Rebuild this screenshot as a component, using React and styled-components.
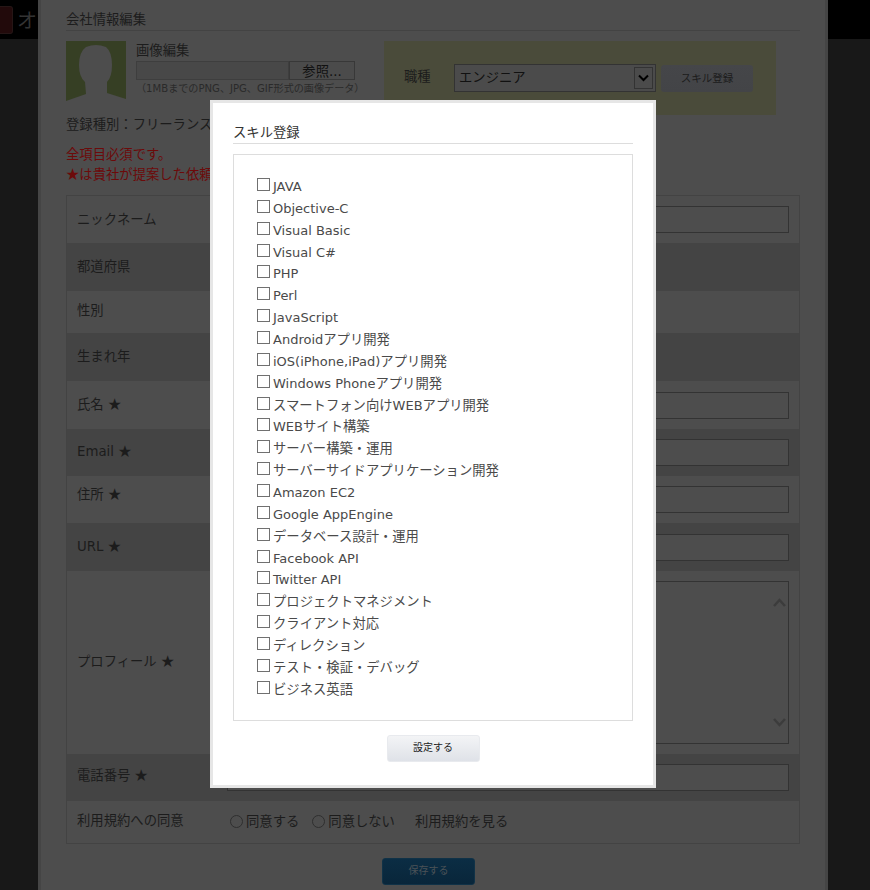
import React from "react";
import styled, { createGlobalStyle } from "styled-components";

const GlobalStyle = createGlobalStyle`
  html, body {
    margin: 0;
    height: 890px;
    overflow: hidden;
    background: #181818;
    font-family: "DejaVu Sans", "Noto Sans CJK JP", sans-serif;
    font-size: 13.33px;
    color: #1c1c1c;
  }
`;

const Page = styled.div`
  position: relative;
  width: 870px;
  height: 890px;
  overflow: hidden;
`;

const TopBar = styled.div`
  position: absolute;
  top: 0;
  left: 0;
  right: 0;
  height: 39px;
  background: #000;
  display: flex;
  align-items: center;
  gap: 4px;
`;

const Logo = styled.div`
  width: 12px;
  height: 26px;
  border-radius: 0 3px 3px 0;
  background: #220a0b;
  border: 1px solid #261616;
  border-left: 0;
`;

const TopTitle = styled.span`
  color: #333;
  font-size: 20px;
`;

const Sheet = styled.div`
  position: relative;
  width: 734px;
  height: 890px;
  margin-left: 38px;
  padding: 0 25px;
  background: #4d4d4d;
  border: solid #454545;
  border-width: 0 3px;
`;

const Heading = styled.h2`
  margin: 0;
  height: 31px;
  padding-top: 10px;
  box-sizing: border-box;
  font-size: 13.33px;
  font-weight: normal;
  line-height: 19px;
  border-bottom: 1px solid #434343;
`;

const TopRow = styled.div`
  display: flex;
  margin-top: 10px;
  height: 74px;
`;

const Avatar = styled.svg`
  width: 60px;
  height: 60px;
  flex: none;
  display: block;
`;

const UploadBlock = styled.div`
  width: 248px;
  margin-left: 10px;
`;

const UploadLabel = styled.div`
  line-height: 19px;
`;

const FileRow = styled.div`
  display: flex;
  height: 19px;
  margin-top: 1px;
`;

const FileField = styled.div`
  width: 153px;
  background: #484848;
  border: 1px solid #3e3e3e;
  box-sizing: border-box;
`;

const FileButton = styled.div`
  width: 66px;
  background: #4b4b4b;
  border: 1px solid #383838;
  box-sizing: border-box;
  text-align: center;
  line-height: 19px;
  color: #111;
`;

const Note = styled.div`
  font-size: 10.1px;
  line-height: 18px;
  white-space: nowrap;
  color: #2a2a2a;
`;

const JobPanel = styled.div`
  width: 392px;
  padding: 23px 0 0 20px;
  box-sizing: border-box;
  height: 74px;
  background: #4a4b3a;
  display: flex;
  align-items: flex-start;
`;

const JobLabel = styled.span`
  width: 50px;
  line-height: 25px;
`;

const SelectBox = styled.div`
  width: 202px;
  height: 28px;
  box-sizing: border-box;
  border: 1px solid #333;
  background: #4b4b4b;
  display: flex;
  align-items: center;
  justify-content: space-between;
  padding: 0 2px 0 4px;
  color: #111;
`;

const SelectValue = styled.span`
  margin-bottom: 3px;
`;

const SelectArrow = styled.div`
  width: 19px;
  height: 22px;
  box-sizing: border-box;
  border: 1px solid #333;
  display: flex;
  align-items: center;
  justify-content: center;
`;

const SmallButton = styled.div`
  width: 92px;
  height: 27px;
  margin: 1px 0 0 5px;
  border-radius: 3px;
  background: linear-gradient(#454649, #434447);
  font-size: 10.5px;
  line-height: 26px;
  text-align: center;
  color: #1c1c1c;
`;

const Info = styled.p`
  margin: 0;
  line-height: ${(p) => p.$line || 19}px;
  padding-top: ${(p) => p.$top || 0}px;
  color: ${(p) => p.$color || "#1c1c1c"};
  white-space: nowrap;
`;

const Star = styled.span`
  font-family: "Noto Sans CJK JP", sans-serif;
`;

const FormTable = styled.div`
  margin-top: 10px;
  width: 734px;
  box-sizing: border-box;
  border: 1px solid #434343;
`;

const Row = styled.div`
  display: flex;
  align-items: center;
  height: ${(p) => p.$h}px;
  background: ${(p) => (p.$alt ? "#444" : "#4d4d4d")};
  padding: 0 10px;
  box-sizing: border-box;
`;

const RowLabel = styled.div`
  width: 150px;
  flex: none;
  padding-bottom: ${(p) => p.$lift || 0}px;
`;

const Input = styled.div`
  flex: 1;
  height: 27px;
  box-sizing: border-box;
  border: 1px solid #333;
  background: #4d4d4d;
`;

const TextBox = styled.div`
  flex: 1;
  height: 163px;
  box-sizing: border-box;
  border: 1px solid #333;
  padding: 16px 2px 16px 0;
  display: flex;
  flex-direction: column;
  justify-content: space-between;
  align-items: flex-end;
`;

const ScrollArrow = styled.svg`
  width: 13px;
  height: 9px;
  display: block;
`;

const Agreement = styled.div`
  display: flex;
  align-items: center;
  gap: 3px;
  padding: 0 0 3px 3px;
`;

const Radio = styled.input`
  appearance: none;
  width: 13px;
  height: 13px;
  margin: 0;
  border: 1px solid #2f2f2f;
  border-radius: 50%;
  position: relative;
  top: 1px;
`;

const RadioText = styled.span`
  margin-right: ${(p) => p.$gap || 0}px;
`;

const SaveRow = styled.div`
  display: flex;
  justify-content: center;
  margin-top: 14px;
  padding-right: 9px;
`;

const SaveButton = styled.div`
  width: 93px;
  height: 27px;
  border-radius: 3px;
  background: linear-gradient(#0b2d44, #09263a);
  border: 1px solid #103247;
  box-sizing: border-box;
  color: #4a5257;
  font-size: 10px;
  line-height: 24px;
  text-align: center;
`;

const Modal = styled.div`
  position: absolute;
  left: 210px;
  top: 100px;
  width: 446px;
  height: 688px;
  box-sizing: border-box;
  background: #fff;
  border: 3px solid #e6e6e6;
  padding: 20px 20px 0;
  color: #4a4a4a;
`;

const ModalTitle = styled.h3`
  margin: 0;
  height: 20px;
  font-size: 13.33px;
  font-weight: normal;
  line-height: 19px;
  color: #333;
  border-bottom: 1px solid #ddd;
`;

const SkillBox = styled.div`
  margin-top: 10px;
  height: 567px;
  box-sizing: border-box;
  border: 1px solid #ddd;
  padding: 20px 23px;
`;

const SkillRow = styled.label`
  display: flex;
  align-items: flex-start;
  height: 21.87px;
  line-height: 23.87px;
  white-space: nowrap;
`;

const Check = styled.input`
  appearance: none;
  width: 13px;
  height: 13px;
  flex: none;
  margin: 3px 3px 0 0;
  box-sizing: border-box;
  border: 1px solid #707070;
  background: #fff;
`;

const Latin = styled.span`
  font-size: 13px;
`;

const ModalFooter = styled.div`
  display: flex;
  justify-content: center;
  margin-top: 14px;
`;

const SetButton = styled.div`
  width: 93px;
  height: 27px;
  box-sizing: border-box;
  border-radius: 3px;
  border: 1px solid #e8eaee;
  background: linear-gradient(#f3f4f6, #dfe2e8);
  font-size: 10px;
  line-height: 24px;
  text-align: center;
  color: #222;
`;

const skills = [
  "JAVA",
  "Objective-C",
  "Visual Basic",
  "Visual C#",
  "PHP",
  "Perl",
  "JavaScript",
  "Androidアプリ開発",
  "iOS(iPhone,iPad)アプリ開発",
  "Windows Phoneアプリ開発",
  "スマートフォン向けWEBアプリ開発",
  "WEBサイト構築",
  "サーバー構築・運用",
  "サーバーサイドアプリケーション開発",
  "Amazon EC2",
  "Google AppEngine",
  "データベース設計・運用",
  "Facebook API",
  "Twitter API",
  "プロジェクトマネジメント",
  "クライアント対応",
  "ディレクション",
  "テスト・検証・デバッグ",
  "ビジネス英語",
];

const rows = [
  { label: "ニックネーム", h: 47, lift: 2, input: true },
  { label: "都道府県", h: 48, lift: 4, alt: true },
  { label: "性別", h: 42, lift: 6 },
  { label: "生まれ年", h: 48, lift: 4, alt: true },
  { label: "氏名", h: 48, lift: 4, star: true, input: true },
  { label: "Email", h: 47, lift: 4, star: true, alt: true, input: true },
  { label: "住所", h: 47, lift: 12, star: true, input: true },
  { label: "URL", h: 48, lift: 4, star: true, alt: true, input: true },
];

// latin runs are set a bit smaller than the japanese around them
const mixed = (text) =>
  text.split(/([\x20-\x7e]+)/).map((part, i) =>
    /[\x20-\x7e]/.test(part) ? <Latin key={i}>{part}</Latin> : part
  );

const App = () => (
  <Page>
    <GlobalStyle />
    <TopBar>
      <Logo />
      <TopTitle>オフ</TopTitle>
    </TopBar>
    <Sheet>
      <Heading>会社情報編集</Heading>
      <TopRow>
        <Avatar viewBox="0 0 60 60">
          <rect width="60" height="60" fill="#363f24" />
          <path
            d="M20 6 Q30 2 40 6 Q46 11 46 24 Q46 36 41 41 L41 52 L60 58 L60 60 L0 60 L20 53 L19 41 Q13 36 13 24 Q13 11 20 6 Z"
            fill="#4d4d4d"
          />
        </Avatar>
        <UploadBlock>
          <UploadLabel>画像編集</UploadLabel>
          <FileRow>
            <FileField />
            <FileButton>参照...</FileButton>
          </FileRow>
          <Note>（1MBまでのPNG、JPG、GIF形式の画像データ）</Note>
        </UploadBlock>
        <JobPanel>
          <JobLabel>職種</JobLabel>
          <SelectBox>
            <SelectValue>エンジニア</SelectValue>
            <SelectArrow>
              <svg width="11" height="8" viewBox="0 0 11 8">
                <path d="M1 1.500 L5.500 6 L10 1.500" fill="none" stroke="#000" strokeWidth="2" />
              </svg>
            </SelectArrow>
          </SelectBox>
          <SmallButton>スキル登録</SmallButton>
        </JobPanel>
      </TopRow>
      <Info>登録種別：フリーランス</Info>
      <Info $top={11} $color="#6c0a0a">全項目必須です。</Info>
      <Info $line={20} $color="#6c0a0a"><Star>★</Star>は貴社が提案した依頼</Info>
      <FormTable>
        {rows.map((r) => (
          <Row key={r.label} $h={r.h} $alt={r.alt}>
            <RowLabel $lift={r.lift}>
              {r.label}
              {r.star && <> <Star>★</Star></>}
            </RowLabel>
            {r.input && <Input />}
          </Row>
        ))}
        <Row $h={183}>
          <RowLabel $lift={4}>プロフィール <Star>★</Star></RowLabel>
          <TextBox>
            <ScrollArrow viewBox="0 0 13 9">
              <path d="M1 8 L6.500 2 L12 8" fill="none" stroke="#3c3c3c" strokeWidth="2.500" />
            </ScrollArrow>
            <ScrollArrow viewBox="0 0 13 9">
              <path d="M1 1 L6.500 7 L12 1" fill="none" stroke="#3c3c3c" strokeWidth="2.500" />
            </ScrollArrow>
          </TextBox>
        </Row>
        <Row $h={47} $alt>
          <RowLabel $lift={6}>電話番号 <Star>★</Star></RowLabel>
          <Input />
        </Row>
        <Row $h={42}>
          <RowLabel $lift={6}>利用規約への同意</RowLabel>
          <Agreement>
            <Radio type="radio" name="agree" />
            <RadioText $gap={10}>同意する</RadioText>
            <Radio type="radio" name="agree" />
            <RadioText $gap={17}>同意しない</RadioText>
            <RadioText>利用規約を見る</RadioText>
          </Agreement>
        </Row>
      </FormTable>
      <SaveRow>
        <SaveButton>保存する</SaveButton>
      </SaveRow>
    </Sheet>
    <Modal>
      <ModalTitle>スキル登録</ModalTitle>
      <SkillBox>
        {skills.map((s) => (
          <SkillRow key={s}>
            <Check type="checkbox" />
            <span>{mixed(s)}</span>
          </SkillRow>
        ))}
      </SkillBox>
      <ModalFooter>
        <SetButton>設定する</SetButton>
      </ModalFooter>
    </Modal>
  </Page>
);

export default App;
